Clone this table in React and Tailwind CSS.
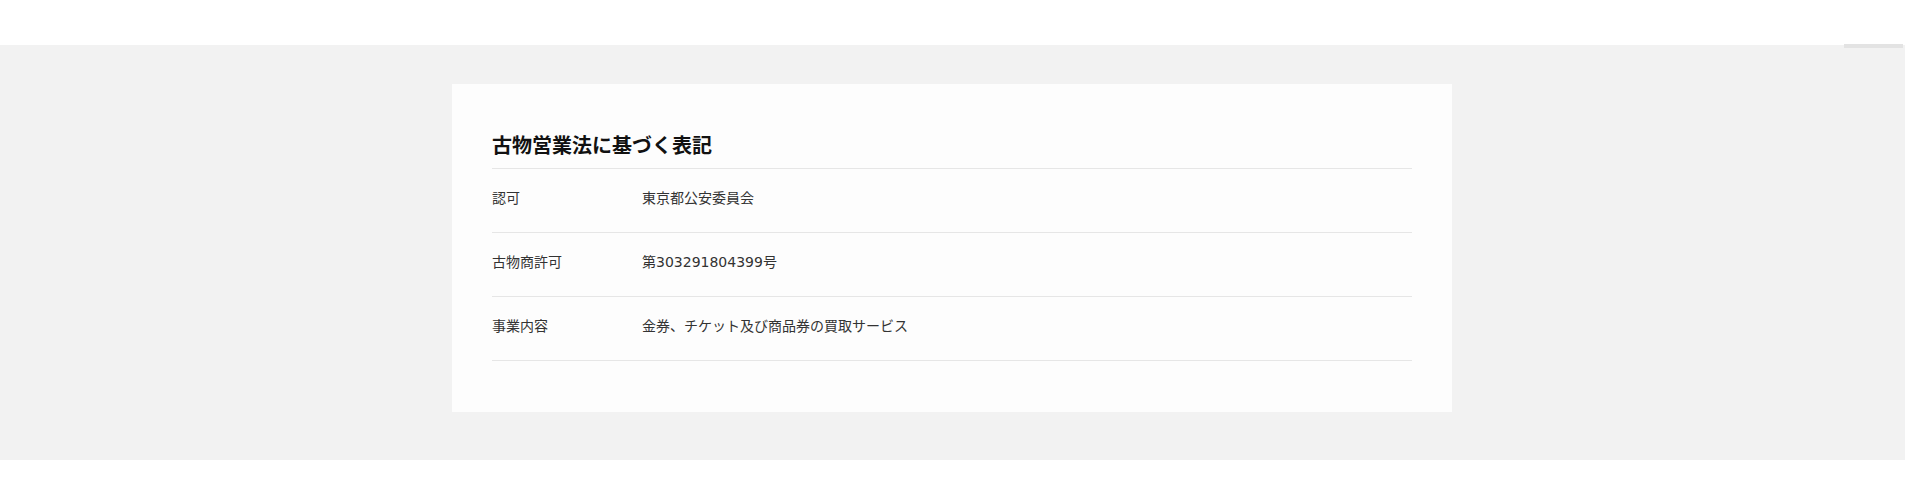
const rows = [
  { label: "認可", value: "東京都公安委員会" },
  { label: "古物商許可", value: "第303291804399号" },
  { label: "事業内容", value: "金券、チケット及び商品券の買取サービス" },
];

export default function App() {
  return (
    <div
      className="relative w-full min-h-[504px] bg-white"
      style={{ fontFamily: '"Noto Sans CJK JP", "Noto Sans", sans-serif' }}
    >
      <div className="h-[45px]" />
      <div className="absolute right-[2px] top-[44px] w-[59px] h-[4px] bg-[#e3e3e3]" />
      <section className="bg-[#f2f2f2] pt-[39px] pb-[48px]">
        <div className="w-[1000px] ml-[452px] bg-[#fdfdfd] px-[40px] pt-[46px] pb-[51px]">
          <h2 className="text-[20px] leading-[30px] font-bold text-[#111] pb-[8px] border-b border-[#e6e6e6]">
            古物営業法に基づく表記
          </h2>
          <dl>
            {rows.map((r) => (
              <div
                key={r.label}
                className="flex items-center h-[64px] pb-[5px] border-b border-[#e6e6e6] text-[14px] text-[#333] font-['DejaVu_Sans','Noto_Sans_CJK_JP',sans-serif]"
              >
                <dt className="w-[150px] shrink-0">{r.label}</dt>
                <dd>{r.value}</dd>
              </div>
            ))}
          </dl>
        </div>
      </section>
    </div>
  );
}
